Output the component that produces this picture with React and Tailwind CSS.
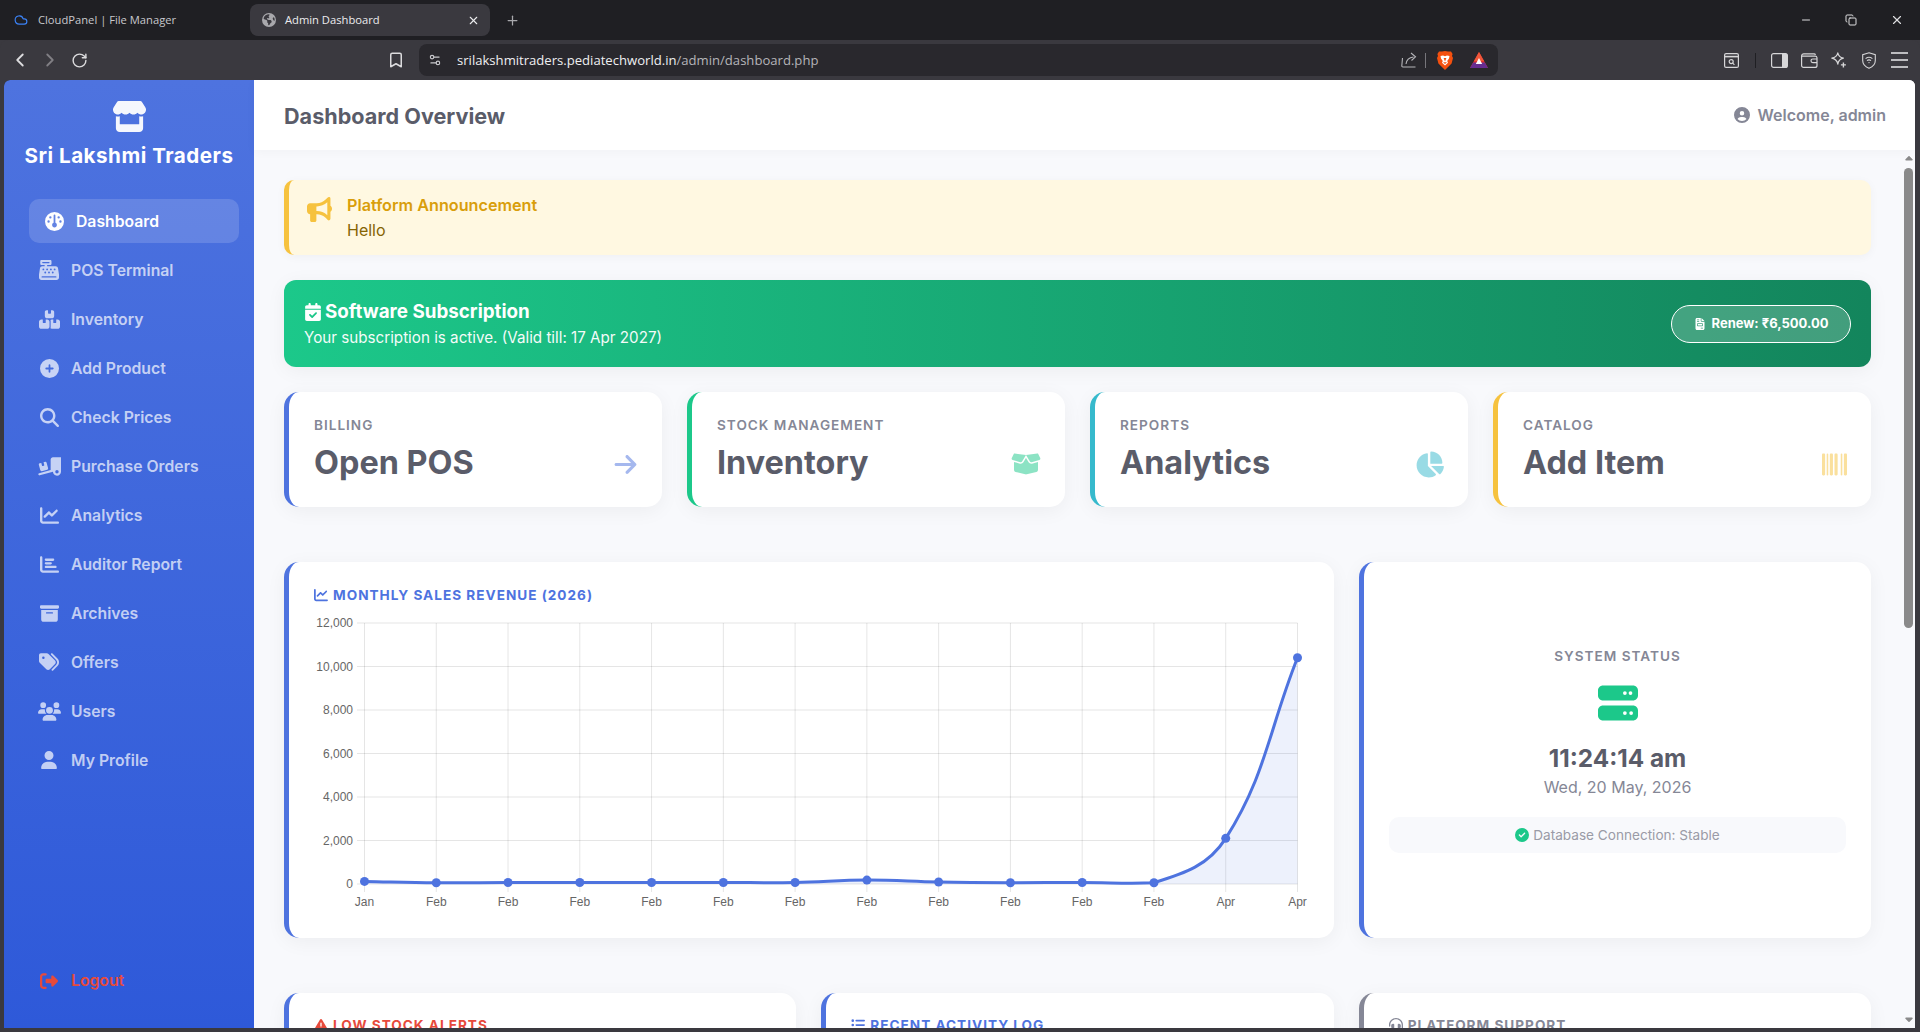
import {
  FaStore, FaGauge, FaCashRegister, FaBoxesStacked, FaCirclePlus, FaMagnifyingGlass, FaTruckRampBox, FaChartLine,
  FaChartBar, FaBoxArchive, FaTags, FaUsers, FaUser, FaRightFromBracket, FaCircleUser, FaBullhorn, FaCalendarCheck,
  FaFileInvoice, FaArrowRight, FaBoxOpen, FaChartPie, FaBarcode, FaServer, FaCircleCheck,
  FaTriangleExclamation, FaListUl, FaHeadset, FaCaretUp, FaCaretDown, FaEarthAmericas,
} from "react-icons/fa6";
import { ChevronLeft, ChevronRight, RotateCw, Bookmark, Settings2, Plus, X, Minus, Cloud, Copy } from "lucide-react";

const navItems = [
  { label: "Dashboard", icon: FaGauge, size: 19, active: true },
  { label: "POS Terminal", icon: FaCashRegister, size: 20 },
  { label: "Inventory", icon: FaBoxesStacked, size: 21 },
  { label: "Add Product", icon: FaCirclePlus, size: 19 },
  { label: "Check Prices", icon: FaMagnifyingGlass, size: 19 },
  { label: "Purchase Orders", icon: FaTruckRampBox, size: 23 },
  { label: "Analytics", icon: FaChartLine, size: 19 },
  { label: "Auditor Report", icon: FaChartBar, size: 19 },
  { label: "Archives", icon: FaBoxArchive, size: 19 },
  { label: "Offers", icon: FaTags, size: 20 },
  { label: "Users", icon: FaUsers, size: 23 },
  { label: "My Profile", icon: FaUser, size: 18 },
];

const actions = [
  { label: "BILLING", title: "Open POS", icon: FaArrowRight, size: 25, border: "border-[#4e73df]", color: "text-[#4e73df]" },
  { label: "STOCK MANAGEMENT", title: "Inventory", icon: FaBoxOpen, size: 30, border: "border-[#1cc88a]", color: "text-[#1cc88a]" },
  { label: "REPORTS", title: "Analytics", icon: FaChartPie, size: 29, border: "border-[#36b9cc]", color: "text-[#36b9cc]" },
  { label: "CATALOG", title: "Add Item", icon: FaBarcode, size: 25, border: "border-[#f6c23e]", color: "text-[#f6c23e]" },
];

const sales = [120, 60, 70, 70, 70, 70, 70, 180, 90, 60, 70, 60, 2100, 10400];
const months = ["Jan", "Feb", "Feb", "Feb", "Feb", "Feb", "Feb", "Feb", "Feb", "Feb", "Feb", "Feb", "Apr", "Apr"];
const left = 364.5, right = 1297.5, top = 623, bottom = 884;
const stepX = (right - left) / 13;
const points = sales.map((v, i) => ({ x: left + i * stepX, y: bottom - (v * (bottom - top)) / 12000 }));

// same spline as chart.js with tension 0.4
function linePath(pts) {
  const t = 0.4;
  const ctrl = pts.map((p, i) => {
    const a = pts[i - 1] || p, b = pts[i + 1] || p;
    const d01 = Math.hypot(p.x - a.x, p.y - a.y), d12 = Math.hypot(b.x - p.x, b.y - p.y);
    const s = d01 + d12 || 1;
    return {
      px: p.x - (t * d01 / s) * (b.x - a.x),
      py: Math.min(bottom, p.y - (t * d01 / s) * (b.y - a.y)),
      nx: p.x + (t * d12 / s) * (b.x - a.x),
      ny: Math.min(bottom, p.y + (t * d12 / s) * (b.y - a.y)),
    };
  });
  let d = `M${pts[0].x} ${pts[0].y}`;
  for (let i = 1; i < pts.length; i++) {
    d += ` C${ctrl[i - 1].nx} ${ctrl[i - 1].ny} ${ctrl[i].px} ${ctrl[i].py} ${pts[i].x} ${pts[i].y}`;
  }
  return d;
}

function SalesChart() {
  const line = linePath(points);
  const ticks = [12000, 10000, 8000, 6000, 4000, 2000, 0];
  return (
    <svg viewBox="314 612 1000 306" className="block w-[1000px] h-[306px]">
      {ticks.map((v) => {
        const y = bottom - (v * (bottom - top)) / 12000;
        return (
          <g key={v}>
            <line x1="357" x2={right} y1={y} y2={y} stroke="rgba(0,0,0,0.1)" />
            <text x="353" y={y + 4} textAnchor="end" fontSize="12" fill="#666" fontFamily="'Liberation Sans', sans-serif">
              {v.toLocaleString("en-US")}
            </text>
          </g>
        );
      })}
      {points.map((p, i) => (
        <g key={i}>
          <line x1={p.x} x2={p.x} y1={top} y2={bottom + 8} stroke="rgba(0,0,0,0.1)" />
          <text x={p.x} y="906" textAnchor="middle" fontSize="12" fill="#666" fontFamily="'Liberation Sans', sans-serif">
            {months[i]}
          </text>
        </g>
      ))}
      <path d={`${line} L${right} ${bottom} L${left} ${bottom} Z`} fill="rgba(78,115,223,0.1)" />
      <path d={line} fill="none" stroke="#4e73df" strokeWidth="3" />
      {points.map((p, i) => (
        <circle key={i} cx={p.x} cy={p.y} r="4.5" fill="#4e73df" />
      ))}
    </svg>
  );
}

function ShareIcon() {
  return (
    <svg viewBox="0 0 16 16" className="w-4 h-4" fill="none" stroke="#b5b5b9" strokeWidth="1.1">
      <path d="M1.5 6 L0.8 14 a1 1 0 0 0 1 1 H14.5" />
      <path d="M5 12 C5.5 7.5 8 5.5 12.5 5 M10 1 L14.5 4.8 L10.5 8.5" />
    </svg>
  );
}

function BraveIcon() {
  return (
    <svg viewBox="0 0 16 19" className="w-4 h-[19px]">
      <path d="M8 0 L11 0.6 L14 0.4 L15.6 3 L15 5 L16 7 L14.6 12.5 L8 19 L1.4 12.5 L0 7 L1 5 L0.4 3 L2 0.4 L5 0.6 Z" fill="#f4500f" />
      <path d="M3.5 5 L6 4.6 L8 5.2 L10 4.6 L12.5 5 L12 7.5 L10.2 10 L11 11.8 L8 14.5 L5 11.8 L5.8 10 L4 7.5 Z" fill="#fff" />
      <path d="M6.6 7 L8 10.5 L9.4 7 Z" fill="#f4500f" />
      <path d="M6 11.2 L10 11.2 L8 13 Z" fill="#f4500f" />
    </svg>
  );
}

function RewardsIcon() {
  return (
    <svg viewBox="0 0 18 16" className="w-[18px] h-4">
      <path d="M9 0 L18 16 L0 16 Z" fill="#e0342f" />
      <path d="M9 0 L14 9 L4 9 Z" fill="#f0573a" />
      <path d="M0 16 L3.2 10.4 L14.8 10.4 L18 16 Z" fill="#662d91" />
      <path d="M9 6 L12.2 12 L5.8 12 Z" fill="#fff" />
    </svg>
  );
}

function SearchPanelIcon() {
  return (
    <svg viewBox="0 0 15 15" className="w-[15px] h-[15px]" fill="none" stroke="#d6d6d8" strokeWidth="1.2">
      <rect x="0.6" y="0.6" width="13.8" height="13.8" rx="1.5" />
      <path d="M0.6 3.6 H14.4" strokeWidth="1.6" />
      <circle cx="7.2" cy="8.6" r="2" />
      <path d="M8.8 10.2 L10.4 11.8" />
    </svg>
  );
}

function SidePanelIcon() {
  return (
    <svg viewBox="0 0 17 15" className="w-[17px] h-[15px]">
      <rect x="0.6" y="0.6" width="15.8" height="13.8" rx="2" fill="none" stroke="#d6d6d8" strokeWidth="1.2" />
      <path d="M11 0.6 H14.4 a2 2 0 0 1 2 2 V12.4 a2 2 0 0 1 -2 2 H11 Z" fill="#d6d6d8" />
    </svg>
  );
}

function WalletIcon() {
  return (
    <svg viewBox="0 0 17 15" className="w-[17px] h-[15px]" fill="none" stroke="#d6d6d8" strokeWidth="1.2">
      <path d="M0.6 3 a2.2 2.2 0 0 1 2.2 -2.2 H13 a2 2 0 0 1 1.6 1 M0.6 3 V12.4 a2 2 0 0 0 2 2 H14 a2 2 0 0 0 2 -2 V4.8 a1.8 1.8 0 0 0 -1.8 -1.6 H0.8" />
      <path d="M16 6 H11.8 a1.7 1.7 0 0 0 0 3.6 H16" />
    </svg>
  );
}

function LeoIcon() {
  return (
    <svg viewBox="0 0 16 16" className="w-4 h-4" fill="none" stroke="#d6d6d8" strokeWidth="1.2" strokeLinejoin="round">
      <path d="M6.8 0.8 C7.4 4 8.8 5.4 12.4 6.2 C8.8 7 7.4 8.4 6.8 12.2 C6.2 8.4 4.6 7 0.8 6.2 C4.6 5.4 6.2 4 6.8 0.8 Z" />
      <path d="M12.4 10.4 V15.4 M9.9 12.9 H14.9" strokeWidth="1.4" />
    </svg>
  );
}

function VpnIcon() {
  return (
    <svg viewBox="0 0 14 17" className="w-[14px] h-[17px]" fill="none" stroke="#d6d6d8" strokeWidth="1.1">
      <path d="M7 0.7 L13.3 2.6 V8.5 C13.3 12.2 10.6 14.9 7 16.3 C3.4 14.9 0.7 12.2 0.7 8.5 V2.6 Z" />
      <path d="M3.6 6.6 C5.6 5 8.4 5 10.4 6.6 M5 8.6 C6.2 7.7 7.8 7.7 9 8.6" />
      <circle cx="7" cy="10.6" r="0.7" fill="#d6d6d8" stroke="none" />
    </svg>
  );
}

function BrowserChrome() {
  return (
    <>
      <div className="h-10 flex items-center bg-[#1f1f23] text-[#c8c8cc] text-[11.2px] font-['Open_Sans',sans-serif]">
        <div className="w-[250px] flex items-center pl-[14px]">
          <Cloud size={14} className="text-[#3b82f6]" />
          <span className="ml-[10px]">CloudPanel | File Manager</span>
        </div>
        <div className="w-[240px] h-8 rounded-lg bg-[#3a393f] flex items-center pl-3 pr-[10px] text-[#ececee]">
          <FaEarthAmericas size={14} className="text-[#a8a8ac]" />
          <span className="ml-[9px] flex-1">Admin Dashboard</span>
          <X size={13} />
        </div>
        <Plus size={15} className="ml-[15px] text-[#a8a8ac]" />
        <div className="ml-auto flex items-center gap-[33px] pr-[16px] text-[#dedee0]">
          <Minus size={12} />
          <Copy size={12} />
          <X size={14} />
        </div>
      </div>
      <div className="h-10 flex items-center bg-[#3a393f] rounded-t-lg text-[#dcdcde] font-['Open_Sans',sans-serif]">
        <ChevronLeft size={22} className="ml-[9px]" />
        <ChevronRight size={22} className="ml-[8px] text-[#807f84]" />
        <RotateCw size={17} className="ml-[10px]" />
        <Bookmark size={18} className="ml-[299px]" />
        <div className="ml-[14px] w-[1079px] h-8 rounded-lg bg-[#29282d] flex items-center pl-[9px] pr-[10px]">
          <Settings2 size={14} className="text-[#c8c8cc]" />
          <span className="ml-[15px] text-[13.1px] translate-y-px text-[#efeff1]">
            srilakshmitraders.pediatechworld.in<span className="text-[#b5b5b9]">/admin/dashboard.php</span>
          </span>
          <div className="ml-auto"><ShareIcon /></div>
          <div className="w-px h-[15px] bg-[#77767b] ml-2" />
          <div className="ml-[11px]"><BraveIcon /></div>
          <div className="ml-[17px]"><RewardsIcon /></div>
        </div>
        <div className="ml-[226px]"><SearchPanelIcon /></div>
        <div className="w-px h-[15px] bg-[#1f1f23] ml-4" />
        <div className="ml-[15px]"><SidePanelIcon /></div>
        <div className="ml-[13px]"><WalletIcon /></div>
        <div className="ml-[13px]"><LeoIcon /></div>
        <div className="ml-[15px]"><VpnIcon /></div>
        <div className="ml-[15px] w-[17px] flex flex-col gap-[5px]">
          <div className="h-[2px] bg-[#bdbdc0]" />
          <div className="h-[2px] bg-[#bdbdc0]" />
          <div className="h-[2px] bg-[#bdbdc0]" />
        </div>
      </div>
    </>
  );
}

function Sidebar() {
  return (
    <aside className="w-[250px] shrink-0 flex flex-col bg-gradient-to-b from-[#4e73df] to-[#2e59d9] rounded-tl-md">
      <div className="flex flex-col items-center pt-[19px]">
        <FaStore size={35} className="text-white opacity-95" />
        <div className="mt-2 text-[20.6px] leading-7 font-bold tracking-[0.5px] text-white">Sri Lakshmi Traders</div>
      </div>
      <nav className="mt-[29px] pl-5 flex flex-col gap-[5px]">
        {navItems.map((item) => (
          <a
            key={item.label}
            className={
              item.active
                ? "w-[210px] h-11 flex items-center pl-[15px] gap-3 rounded-[10px] bg-white/15 text-white font-semibold text-[15.75px] translate-x-[5px]"
                : "w-[210px] h-11 flex items-center pl-[15px] gap-3 rounded-[10px] text-white/70 font-semibold text-[15.75px]"
            }
          >
            <span className="w-5 flex justify-center"><item.icon size={item.size} className="shrink-0" /></span>
            <span className="translate-y-px">{item.label}</span>
          </a>
        ))}
      </nav>
      <a className="mt-auto mb-[25px] ml-[35px] h-11 flex items-center gap-3 text-[#e74a3b] font-semibold text-[15.75px]">
        <span className="w-5 flex justify-center"><FaRightFromBracket size={18} /></span>
        Logout
      </a>
    </aside>
  );
}

function ActionCard({ item }) {
  return (
    <div className={`h-[115px] rounded-[15px] bg-white border-l-[5px] ${item.border} shadow-[0_4px_20px_rgba(0,0,0,0.05)] pl-[25px] pr-[24px] pt-[23px]`}>
      <div className="text-[13.6px] leading-5 font-semibold tracking-[1px] text-[#858796]">{item.label}</div>
      <div className="flex items-center justify-between mt-[5px]">
        <div className="text-[32.4px] leading-[46px] font-bold text-[#5a5c69]">{item.title}</div>
        <item.icon size={item.size} className={`${item.color} opacity-50 translate-y-px`} />
      </div>
    </div>
  );
}

function BottomCard({ title, icon: Icon, border, color }) {
  return (
    <div className={`h-[200px] rounded-[15px] bg-white border-l-[5px] ${border} shadow-[0_4px_20px_rgba(0,0,0,0.05)] pl-[25px] pt-[22px]`}>
      <div className={`flex items-center gap-[5px] text-[13.6px] leading-5 font-bold tracking-[1px] ${color}`}>
        <Icon size={14} />
        {title}
      </div>
    </div>
  );
}

export default function App() {
  return (
    <div className="h-[1032px] w-full overflow-hidden flex flex-col bg-[#3a393f] font-['Inter',sans-serif]">
      <BrowserChrome />
      <div className="h-[948px] mx-[4px] mr-[5px] flex overflow-hidden rounded-t-md">
        <Sidebar />
        <div className="flex-1 flex flex-col min-w-0 bg-[#f8f9fc]">
          <header className="h-[70px] shrink-0 bg-white flex items-center justify-between pl-[30px] pr-[29px] shadow-[0_2px_10px_rgba(0,0,0,0.03)] relative z-10">
            <h1 className="text-[21.6px] font-bold text-[#5a5c69] translate-y-px">Dashboard Overview</h1>
            <div className="flex items-center gap-2 text-[16px] font-semibold text-[#858796]">
              <FaCircleUser size={16} />
              Welcome, admin
            </div>
          </header>
          <div className="flex-1 flex min-h-0">
            <main className="flex-1 min-w-0 overflow-hidden pt-[30px] pl-[30px] pr-[31px]">
              <section className="h-[75px] flex rounded-[10px] bg-[#fff8e1] border-l-[5px] border-[#f6c23e] shadow-[0_2px_10px_rgba(0,0,0,0.04)] pl-[18px] pt-[13px]">
                <FaBullhorn size={25} className="text-[#f6c23e] mt-[4px]" />
                <div className="ml-[15px]">
                  <div className="text-[16.2px] leading-6 font-semibold text-[#d99e0b]">Platform Announcement</div>
                  <div className="text-[16px] leading-6 mt-px text-[#856404]">Hello</div>
                </div>
              </section>
              <section className="mt-[25px] h-[87px] rounded-xl bg-gradient-to-r from-[#1cc88a] to-[#13855c] text-white flex items-center justify-between pl-5 pr-5 shadow-[0_4px_20px_rgba(0,0,0,0.05)]">
                <div>
                  <div className="flex items-center gap-[3px] text-[18.8px] leading-7 font-bold translate-y-px">
                    <FaCalendarCheck size={18} />
                    Software Subscription
                  </div>
                  <div className="text-[15.2px] leading-6 mt-[1px] opacity-95">Your subscription is active. (Valid till: 17 Apr 2027)</div>
                </div>
                <button className="w-[180px] h-[38px] rounded-full bg-white/20 border border-white flex items-center justify-center gap-[6px] text-[13px] font-bold">
                  <FaFileInvoice size={12} />
                  Renew: ₹6,500.00
                </button>
              </section>
              <section className="mt-[25px] grid grid-cols-4 gap-[25px]">
                {actions.map((a) => <ActionCard key={a.label} item={a} />)}
              </section>
              <section className="mt-[55px] flex gap-[25px]">
                <div className="w-[1050px] h-[376px] shrink-0 rounded-[15px] bg-white border-l-[5px] border-[#4e73df] shadow-[0_4px_20px_rgba(0,0,0,0.05)] pl-[25px] pt-[23px]">
                  <div className="flex items-center gap-[5px] text-[13.6px] leading-5 font-bold tracking-[1px] text-[#4e73df]">
                    <FaChartLine size={14} />
                    MONTHLY SALES REVENUE (2026)
                  </div>
                  <div className="mt-[7px]"><SalesChart /></div>
                </div>
                <div className="flex-1 h-[376px] rounded-[15px] bg-white border-l-[5px] border-[#4e73df] shadow-[0_4px_20px_rgba(0,0,0,0.05)] flex flex-col items-center px-[25px] pt-[84px]">
                  <div className="text-[13.6px] leading-5 font-semibold tracking-[1px] text-[#858796]">SYSTEM STATUS</div>
                  <FaServer size={40} className="text-[#1cc88a] mt-[17px]" />
                  <div className="mt-[19px] text-[24.3px] leading-8 font-bold text-[#5a5c69]">11:24:14 am</div>
                  <div className="mt-px text-[16px] leading-6 text-[#858796]">Wed, 20 May, 2026</div>
                  <div className="mt-[18px] w-full h-9 rounded-[10px] bg-[#f8f9fc] flex items-center justify-center gap-1 text-[13.6px] text-[#9a9ba6]">
                    <FaCircleCheck size={14} className="text-[#1cc88a]" />
                    Database Connection: Stable
                  </div>
                </div>
              </section>
              <section className="mt-[55px] grid grid-cols-3 gap-[25px]">
                <BottomCard title="LOW STOCK ALERTS" icon={FaTriangleExclamation} border="border-[#4e73df]" color="text-[#e74a3b]" />
                <BottomCard title="RECENT ACTIVITY LOG" icon={FaListUl} border="border-[#4e73df]" color="text-[#4e73df]" />
                <BottomCard title="PLATFORM SUPPORT" icon={FaHeadset} border="border-[#858796]" color="text-[#858796]" />
              </section>
            </main>
            <div className="w-[13px] shrink-0 flex flex-col items-center bg-[#f8f9fc] text-[#8a8a8a]">
              <FaCaretUp size={12} className="mt-[3px]" />
              <div className="mt-[3px] w-[9px] h-[460px] rounded-full bg-[#8a8a8a]" />
              <FaCaretDown size={12} className="mt-auto mb-[3px]" />
            </div>
          </div>
        </div>
      </div>
    </div>
  );
}
